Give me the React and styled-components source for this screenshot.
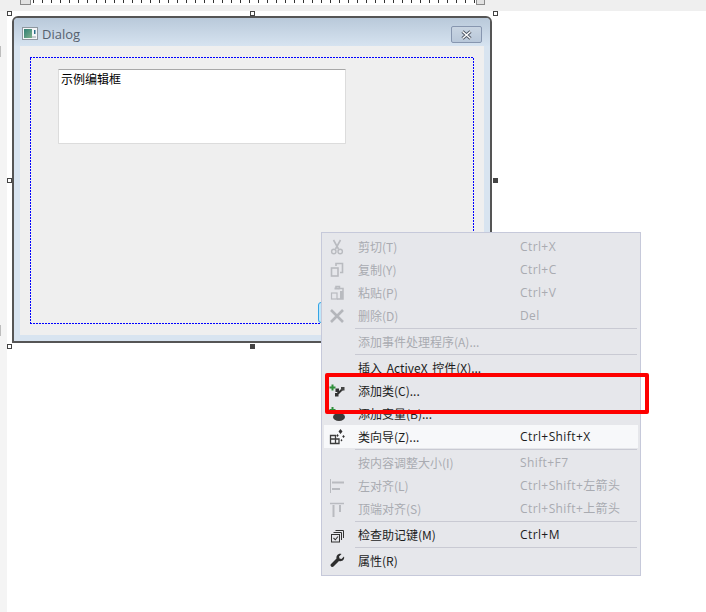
import React from 'react';
import styled, { createGlobalStyle } from 'styled-components';

const GlobalStyle = createGlobalStyle`
  html, body {
    margin: 0;
    padding: 0;
    background: #fff;
    overflow: hidden;
  }
  body {
    font-family: "Open Sans", "Noto Sans CJK SC", sans-serif;
  }
`;

const Page = styled.div`
  position: relative;
  width: 706px;
  height: 612px;
  display: flex;
  flex-direction: column;
  overflow: hidden;
`;

const TopStrip = styled.div`
  height: 11px;
  flex: none;
  background: #efefef;
  padding-left: 20px;
`;

const Ruler = styled.div`
  width: 465px;
  height: 5px;
  display: flex;
  background: #fff;
`;

const RulerCap = styled.div`
  width: ${p => p.$width}px;
  flex: none;
  box-sizing: border-box;
  background: #e2e2e2;
  border: 1px solid #8a8a8a;
  border-top: 0;
`;

const RulerTicks = styled.div`
  flex: 1;
  background: repeating-linear-gradient(90deg, #333 0 1px, #fff 1px 9px) 2px 0 / 100% 3px no-repeat;
`;

const Workspace = styled.div`
  flex: 1;
  display: flex;
`;

const LeftStrip = styled.div`
  width: 7px;
  flex: none;
  background:
    linear-gradient(#bdbdbd, #bdbdbd) 0 35px / 1px 11px no-repeat,
    linear-gradient(#bdbdbd, #bdbdbd) 0 314px / 1px 11px no-repeat,
    #f4f4f4;
`;

const Canvas = styled.div`
  flex: 1;
  background: #fff;
  padding: 5px 0 0 5px;
`;

const DialogWindow = styled.div`
  width: 480px;
  height: 327px;
  box-sizing: border-box;
  border: 2px solid #555;
  border-radius: 6px 6px 0 0;
  background: #d8e4f0;
  display: flex;
  flex-direction: column;
`;

const TitleBar = styled.div`
  height: 28px;
  flex: none;
  box-sizing: border-box;
  display: flex;
  align-items: center;
  gap: 4px;
  padding: 2px 8px 0;
  border-radius: 4px 4px 0 0;
  background: linear-gradient(#b9c9da, #d6e3f0);
`;

const TitleText = styled.span`
  flex: 1;
  margin-top: 2px;
  font-size: 13px;
  color: #56616e;
`;

const CloseButton = styled.div`
  width: 31px;
  height: 17px;
  box-sizing: border-box;
  border: 1px solid #8796af;
  border-radius: 2px;
  background: linear-gradient(#c9d5e2, #b9c8da);
  display: flex;
  align-items: center;
  justify-content: center;
  margin-top: 3px;
`;

const ClientArea = styled.div`
  margin: 0 6px 6px;
  flex: 1;
  background: #efefef;
  padding: 11px 10px 11px 10px;
  display: flex;
`;

const GuideRect = styled.div`
  flex: 1;
  padding: 12px 28px;
  background:
    repeating-linear-gradient(90deg, #00f 0 2px, transparent 2px 3px) 0 0 / 100% 1px no-repeat,
    repeating-linear-gradient(90deg, #00f 0 2px, transparent 2px 3px) 0 100% / 100% 1px no-repeat,
    repeating-linear-gradient(0deg, #00f 0 2px, transparent 2px 3px) 0 0 / 1px 100% no-repeat,
    repeating-linear-gradient(0deg, #00f 0 2px, transparent 2px 3px) 100% 0 / 1px 100% no-repeat;
`;

const EditBox = styled.div`
  width: 288px;
  height: 75px;
  box-sizing: border-box;
  background: #fff;
  border: 1px solid #dcdcdc;
  border-top-color: #a8a8a8;
  border-radius: 1px;
  padding: 1px 2px;
  font-family: "Noto Sans CJK SC", sans-serif;
  font-size: 12px;
  line-height: 16px;
  color: #000;
`;

const Handle = styled.div`
  position: absolute;
  left: ${p => p.$x}px;
  top: ${p => p.$y}px;
  width: 5px;
  height: 5px;
  box-sizing: border-box;
  border: 1px solid #444;
  background: ${p => (p.$filled ? '#444' : '#fff')};
`;

const HiddenButton = styled.div`
  position: absolute;
  left: 318px;
  top: 302px;
  width: 10px;
  height: 21px;
  box-sizing: border-box;
  border: 1px solid #35a5e5;
  border-radius: 3px;
  background: #bfe6fa;
`;

const Menu = styled.div`
  position: absolute;
  left: 321px;
  top: 232px;
  width: 320px;
  height: 344px;
  box-sizing: border-box;
  padding: 2px 2px;
  background: #e6e7eb;
  border: 1px solid #c6c9da;
  font-family: "Noto Sans CJK SC", sans-serif;
  font-size: 12px;
`;

const Row = styled.div`
  height: 23px;
  display: grid;
  grid-template-columns: 34px 162px 1fr;
  align-items: center;
  line-height: 23px;
  white-space: nowrap;
  color: ${p => (p.$disabled ? '#a9abb1' : '#1c1c1c')};
  background: ${p => (p.$active ? '#f7f8fa' : 'transparent')};
`;

const IconCell = styled.span`
  display: flex;
  align-items: center;
  justify-content: center;
  padding-right: 8px;
`;

const Label = styled.span`
  margin-top: -1px;
  word-spacing: 2px;
`;

const Shortcut = styled.span`
  font-family: "Open Sans", "Noto Sans CJK SC", sans-serif;
  letter-spacing: 0.4px;
`;

const Separator = styled.div`
  height: 1px;
  margin: 1px 1px 1px 31px;
  background: #c9cad3;
`;

const Highlight = styled.div`
  position: absolute;
  left: 325px;
  top: 373px;
  width: 324px;
  height: 41px;
  box-sizing: border-box;
  border: 4px solid #fe0000;
  border-radius: 2px;
`;

const Svg = ({ children }) => (
  <svg width="16" height="16" viewBox="0 0 16 16" fill="none">{children}</svg>
);

const ScissorsIcon = () => (
  <Svg>
    <path d="M4.500 1l5 9M11.500 1l-5 9" stroke="#b9bbc0" strokeWidth="1.600" />
    <circle cx="4.800" cy="12.500" r="2.200" stroke="#b9bbc0" strokeWidth="1.400" />
    <circle cx="11.200" cy="12.500" r="2.200" stroke="#b9bbc0" strokeWidth="1.400" />
  </Svg>
);

const CopyIcon = () => (
  <Svg>
    <path d="M7 4V1.500h6.500v9H11" stroke="#b9bbc0" strokeWidth="1.600" />
    <rect x="2.500" y="6" width="6.500" height="8" stroke="#b9bbc0" strokeWidth="1.600" />
  </Svg>
);

const PasteIcon = () => (
  <Svg>
    <path d="M7 3.500V1.500h3.500v2H14V14H8" stroke="#b9bbc0" strokeWidth="1.500" />
    <path d="M5.500 3.500h5" stroke="#b9bbc0" strokeWidth="2" />
    <rect x="2.500" y="8" width="5.500" height="6" stroke="#b9bbc0" strokeWidth="1.200" />
    <rect x="11" y="6" width="3" height="8" fill="#b9bbc0" />
  </Svg>
);

const DeleteIcon = () => (
  <Svg>
    <path d="M2 2l12 12M14 2L2 14" stroke="#b4b6bb" strokeWidth="2.600" />
  </Svg>
);

const AddClassIcon = () => (
  <Svg>
    <path d="M3.500 1.500v6M.5 4.500h6" stroke="#2f8f3a" strokeWidth="2" />
    <path d="M8 7.500l2 2 4-4M10 9l-2 2.500" stroke="#333" strokeWidth="2" />
    <rect x="6.500" y="5.500" width="3.500" height="3.500" fill="#333" />
    <rect x="12" y="4" width="3.500" height="3.500" fill="#444" />
    <rect x="6" y="10" width="3.500" height="3.500" fill="#333" />
  </Svg>
);

const AddVariableIcon = () => (
  <Svg>
    <path d="M3.500 1v6M.5 4h6" stroke="#2f8f3a" strokeWidth="2" />
    <ellipse cx="10" cy="11" rx="6" ry="4" fill="#3a3a3a" />
  </Svg>
);

const WizardIcon = () => (
  <Svg>
    <path d="M1.500 6.500h5v3.500h3.500v4.500h-8.500zM1.500 10h5v4.500" stroke="#3c3c3c" strokeWidth="1.300" />
    <path d="M11.500 0l2 2.500-2 2.500-2-2.500zM14.500 6l1.300 1.500-1.300 1.500-1.300-1.500zM8.500 5l1.200 1.500-1.200 1.500-1.200-1.500zM12.500 10l1 1.200-1 1.200-1-1.200z" fill="#333" />
  </Svg>
);

const AlignLeftIcon = () => (
  <Svg>
    <path d="M1.500 1v14" stroke="#b9bbc0" />
    <path d="M3 4.500h12M3 11h8" stroke="#b9bbc0" strokeWidth="2" />
  </Svg>
);

const AlignTopIcon = () => (
  <Svg>
    <path d="M1 2.500h14" stroke="#b9bbc0" strokeWidth="1.500" />
    <path d="M4.500 4v12M11 4v7" stroke="#b9bbc0" strokeWidth="2" />
  </Svg>
);

const MnemonicIcon = () => (
  <Svg>
    <rect x="2.500" y="7.500" width="8" height="7.500" stroke="#333" />
    <path d="M4.500 5.500h8V13M6.500 3.500h8V11" stroke="#333" />
    <path d="M4.500 11l1.800 1.800 2.700-3.300" stroke="#333" strokeWidth="1.100" />
  </Svg>
);

const WrenchIcon = () => (
  <Svg>
    <path d="M15 3.500L12.500 6l-2-.5-.5-2L12.500 1C9.500 0 7 2.500 7.500 5.500L2 11c-1.500 1.500 1 4 2.500 2.500L10 8c3 1 6-1.500 5-4.500z" fill="#2e2e2e" />
  </Svg>
);

const DialogIcon = () => (
  <svg width="16" height="13" viewBox="0 0 16 13">
    <defs>
      <linearGradient id="dialogIconFill" x1="0" y1="0" x2="1" y2="1">
        <stop offset="0" stopColor="#2f7f74" />
        <stop offset="1" stopColor="#7fb08c" />
      </linearGradient>
    </defs>
    <rect x="0.500" y="0.500" width="15" height="12" fill="#f4f6f8" stroke="#8f979f" />
    <rect x="2" y="2" width="8" height="9" fill="url(#dialogIconFill)" />
    <rect x="12" y="3" width="1.500" height="4" fill="#2b6f8a" />
    <rect x="10" y="9" width="4" height="2" fill="#c6ccd1" />
  </svg>
);

const menuItems = [
  { icon: <ScissorsIcon />, label: '剪切(T)', shortcut: 'Ctrl+X', disabled: true },
  { icon: <CopyIcon />, label: '复制(Y)', shortcut: 'Ctrl+C', disabled: true },
  { icon: <PasteIcon />, label: '粘贴(P)', shortcut: 'Ctrl+V', disabled: true },
  { icon: <DeleteIcon />, label: '删除(D)', shortcut: 'Del', disabled: true },
  { separator: true },
  { label: '添加事件处理程序(A)...', disabled: true },
  { separator: true },
  { label: '插入 ActiveX 控件(X)...' },
  { icon: <AddClassIcon />, label: '添加类(C)...' },
  { icon: <AddVariableIcon />, label: '添加变量(B)...' },
  { icon: <WizardIcon />, label: '类向导(Z)...', shortcut: 'Ctrl+Shift+X', active: true },
  { separator: true },
  { label: '按内容调整大小(I)', shortcut: 'Shift+F7', disabled: true },
  { icon: <AlignLeftIcon />, label: '左对齐(L)', shortcut: 'Ctrl+Shift+左箭头', disabled: true },
  { icon: <AlignTopIcon />, label: '顶端对齐(S)', shortcut: 'Ctrl+Shift+上箭头', disabled: true },
  { separator: true },
  { icon: <MnemonicIcon />, label: '检查助记键(M)', shortcut: 'Ctrl+M' },
  { separator: true },
  { icon: <WrenchIcon />, label: '属性(R)' },
];

const handles = [
  { x: 7, y: 11 },
  { x: 250, y: 11 },
  { x: 493, y: 11 },
  { x: 7, y: 178 },
  { x: 493, y: 178, filled: true },
  { x: 7, y: 344 },
  { x: 250, y: 344, filled: true },
];

export default function App() {
  return (
    <Page>
      <GlobalStyle />
      <TopStrip>
        <Ruler>
          <RulerCap $width={11} />
          <RulerTicks />
          <RulerCap $width={9} />
        </Ruler>
      </TopStrip>
      <Workspace>
        <LeftStrip />
        <Canvas>
          <DialogWindow>
            <TitleBar>
              <DialogIcon />
              <TitleText>Dialog</TitleText>
              <CloseButton>
                <svg width="13" height="10" viewBox="0 0 13 10">
                  <path d="M2.500 1.500l8 7M10.500 1.500l-8 7" stroke="#4d5563" strokeWidth="3.200" />
                  <path d="M2.500 1.500l8 7M10.500 1.500l-8 7" stroke="#fff" strokeWidth="1.400" />
                </svg>
              </CloseButton>
            </TitleBar>
            <ClientArea>
              <GuideRect>
                <EditBox>示例编辑框</EditBox>
              </GuideRect>
            </ClientArea>
          </DialogWindow>
        </Canvas>
      </Workspace>
      {handles.map(h => (
        <Handle key={`${h.x}-${h.y}`} $x={h.x} $y={h.y} $filled={h.filled} />
      ))}
      <HiddenButton />
      <Menu>
        {menuItems.map((item, i) =>
          item.separator ? (
            <Separator key={i} />
          ) : (
            <Row key={i} $disabled={item.disabled} $active={item.active}>
              <IconCell>{item.icon}</IconCell>
              <Label>{item.label}</Label>
              <Shortcut>{item.shortcut}</Shortcut>
            </Row>
          )
        )}
      </Menu>
      <Highlight />
    </Page>
  );
}
